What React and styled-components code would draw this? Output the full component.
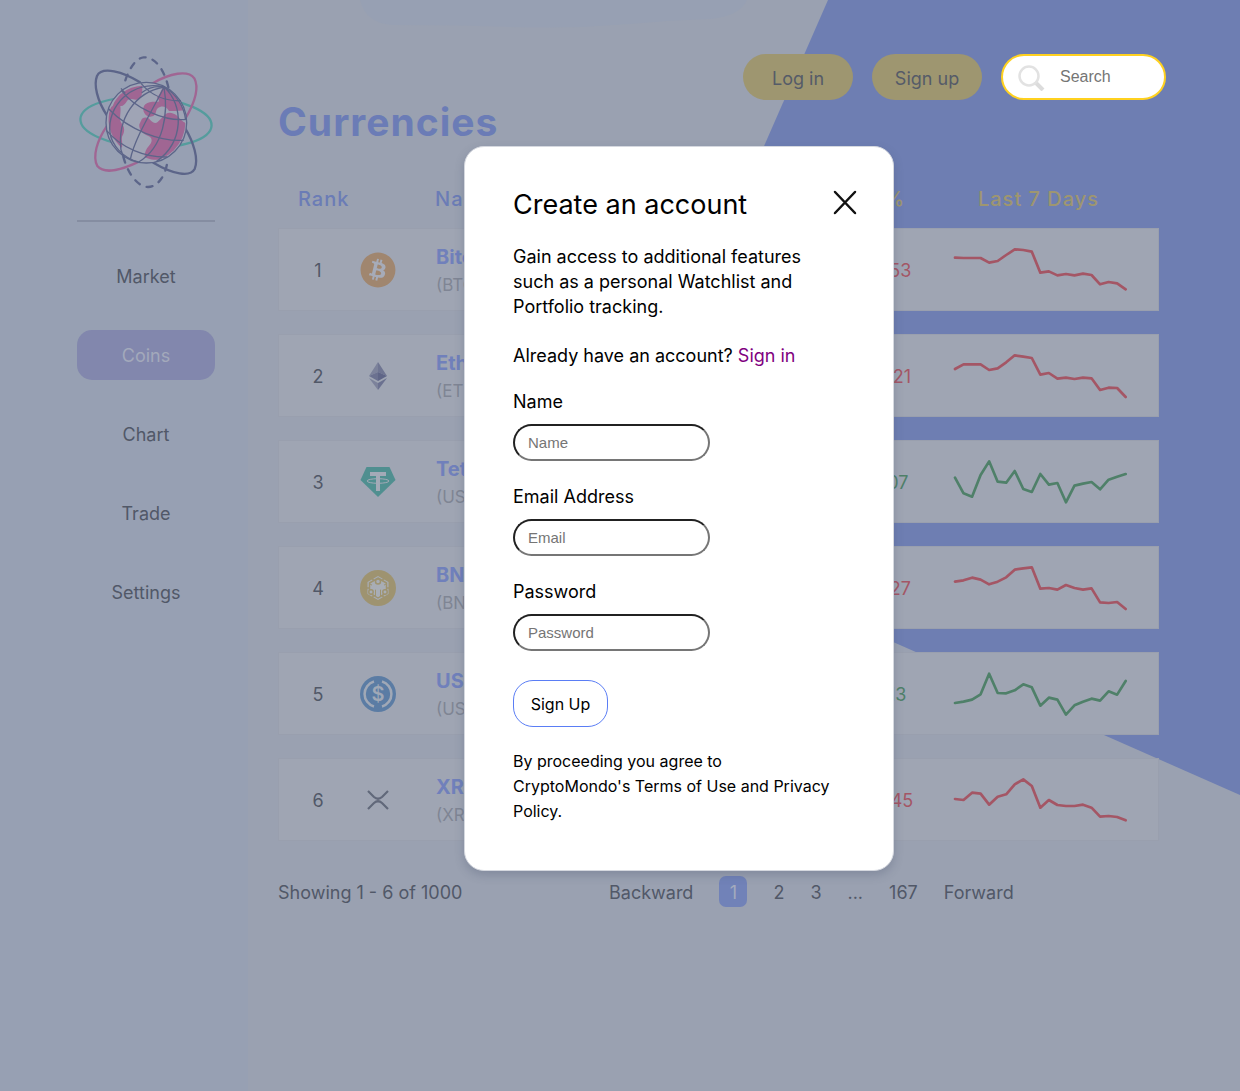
import React from "react";
import styled, { createGlobalStyle, css } from "styled-components";
import { FaBitcoin } from "react-icons/fa";

const color = {
  page: "#9aa1b1",
  sidebar: "#97a0b3",
  card: "#9fa5b3",
  cardEdge: "#999fae",
  blue: "#6e7eb2",
  heading: "#6b7cb6",
  name: "#7080bb",
  yellow: "#9e9670",
  text: "#515868",
  muted: "#7f8594",
  red: "#a45665",
  green: "#4f8069",
};

const GlobalStyle = createGlobalStyle`
  * { box-sizing: border-box; }
  body {
    margin: 0;
    background: ${color.page};
    color: ${color.text};
    font-family: Inter, "Liberation Sans", sans-serif;
    font-size: 18px;
    line-height: 24px;
  }
  button { font-family: inherit; cursor: pointer; }
  a { color: inherit; text-decoration: none; }
`;

const Page = styled.div`
  position: relative;
  display: flex;
  min-height: 100vh;
  overflow: hidden;
`;

const BlueShape = styled.div`
  position: absolute;
  top: 0;
  right: 0;
  width: 637px;
  height: 795px;
  background: ${color.blue};
  clip-path: polygon(225px 0, 100% 0, 100% 100%, 0 514px);
`;

const TopBlob = styled.svg`
  position: absolute;
  top: 0;
  left: 360px;
`;

const Sidebar = styled.aside`
  position: relative;
  flex: 0 0 248px;
  padding: 53px 33px 0 77px;
  background: ${color.sidebar};
`;

const LogoLink = styled.a`
  display: block;
  padding-bottom: 29px;
  border-bottom: 2px solid #858da1;
  svg { display: block; }
`;

const Menu = styled.nav`
  display: grid;
  gap: 29px;
  margin-top: 29px;
`;

const MenuLink = styled.a`
  height: 50px;
  border-radius: 15px;
  line-height: 52px;
  text-align: center;
  ${(p) =>
    p.$active &&
    css`
      background: #8287ad;
      color: #a3a9bb;
    `}
`;

const Main = styled.main`
  position: relative;
  flex: 1;
  min-width: 0;
  padding: 54px 81px 40px 30px;
`;

const TopBar = styled.header`
  display: flex;
  justify-content: flex-end;
  gap: 19px;
  margin-right: -7px;
`;

const PillButton = styled.button`
  width: 110px;
  height: 46px;
  padding: 2px 0 0;
  border: 0;
  border-radius: 23px;
  background: ${color.yellow};
  color: #555b68;
  font-size: 18px;
`;

const SearchBox = styled.label`
  display: flex;
  align-items: center;
  gap: 15px;
  width: 165px;
  height: 46px;
  padding: 0 15px;
  border: 2px solid #ffd11f;
  border-radius: 23px;
  background: #fff;
`;

const SearchInput = styled.input`
  flex: 1;
  min-width: 0;
  padding: 0;
  border: 0;
  outline: 0;
  background: none;
  font: 16px "Liberation Sans", Arial, sans-serif;
  &::placeholder { color: #757575; }
`;

const Title = styled.h1`
  margin: 0;
  color: ${color.heading};
  font-size: 39px;
  font-weight: 700;
  line-height: 44px;
  letter-spacing: 1px;
`;

const CoinTable = styled.table`
  display: block;
  margin-top: 43px;
  thead { display: block; }
  tbody { display: grid; gap: 23px; margin-top: 17px; }
`;

const Row = styled.tr`
  display: grid;
  grid-template-columns: 80px 40px 1fr 66px 241px;
  align-items: center;
`;

const CoinRow = styled(Row)`
  height: 83px;
  background: ${color.card};
  box-shadow: inset 0 0 0 1px ${color.cardEdge};
`;

const Heading = styled.th`
  padding: 0 ${(p) => p.$right || 0}px 0 ${(p) => p.$left || 0}px;
  color: ${(p) => (p.$yellow ? color.yellow : color.heading)};
  font-size: 20px;
  font-weight: 500;
  letter-spacing: 1px;
  text-align: ${(p) => p.$align || "left"};
  white-space: nowrap;
`;

const Cell = styled.td`
  padding: 2px 0 0;
  text-align: center;
  white-space: nowrap;
`;

const DrawingCell = styled.td`
  padding: 0;
  svg { display: block; margin: 0 auto; }
`;

const NameCell = styled(Cell)`
  padding-left: 38px;
  text-align: left;
`;

const CoinName = styled.div`
  color: ${color.name};
  font-size: 20px;
  font-weight: 700;
  line-height: 28px;
`;

const CoinSymbol = styled.div`
  color: ${color.muted};
  font-size: 17px;
  line-height: 28px;
`;

const Change = styled(Cell)`
  padding-left: 10px;
  color: ${(p) => (p.$up ? color.green : color.red)};
`;

const Footer = styled.footer`
  display: flex;
  align-items: flex-start;
  margin-top: 35px;
  line-height: 33px;
`;

const Showing = styled.span`
  flex: 0 0 331px;
`;

const Pager = styled.nav`
  display: flex;
  gap: 26px;
`;

const PageLink = styled.a`
  height: 31px;
  ${(p) =>
    p.$active &&
    css`
      width: 28px;
      border-radius: 7px;
      background: #7182b8;
      color: #a3aabd;
      text-align: center;
    `}
`;

const ModalLayer = styled.div`
  position: absolute;
  inset: 0;
  display: flex;
  align-items: flex-start;
  justify-content: center;
  padding: 146px 0 0 118px;
  pointer-events: none;
`;

const Modal = styled.section`
  width: 430px;
  padding: 41px 48px 46px;
  border: 1px solid #d5d8df;
  border-radius: 20px;
  background: #fff;
  box-shadow: 0 4px 10px rgba(60, 70, 100, 0.25);
  color: #000;
  pointer-events: auto;
`;

const ModalHead = styled.div`
  display: flex;
  justify-content: space-between;
  margin-right: -12px;
`;

const ModalTitle = styled.h2`
  margin: 0;
  font-size: 27px;
  font-weight: 400;
  line-height: 34px;
`;

const CloseButton = styled.button`
  height: 30px;
  padding: 0;
  border: 0;
  background: none;
  svg { display: block; }
`;

const Text = styled.p`
  margin: ${(p) => p.$top}px 0 0;
  line-height: 25px;
`;

const Intro = styled(Text)`
  max-width: 300px;
`;

const Terms = styled(Text)`
  max-width: 324px;
  font-size: 16px;
`;

const SignInLink = styled.a`
  color: #800080;
`;

const Form = styled.form`
  display: grid;
  justify-items: start;
  gap: 24px;
  margin-top: 22px;
`;

const Field = styled.label`
  display: grid;
  gap: 10px;
`;

const FieldInput = styled.input`
  width: 197px;
  height: 37px;
  padding: 0 13px;
  border: 2px inset #767676;
  border-radius: 20px;
  background: #fff;
  font: 15px "Liberation Sans", Arial, sans-serif;
  &::placeholder { color: #757575; }
`;

const SubmitButton = styled.button`
  width: 95px;
  height: 47px;
  margin-top: 5px;
  padding: 0;
  border: 1px solid #5a7df5;
  border-radius: 20px;
  background: #fff;
  color: #000;
  font-size: 16px;
`;

function Logo() {
  const navy = "#5c6589";
  const pink = "#a06693";
  return (
    <svg width="138" height="138" viewBox="51 39 414 414" fill="none" aria-label="CryptoMondo">
      <defs>
        <clipPath id="globe">
          <circle cx="259" cy="248" r="117" />
        </clipPath>
      </defs>
      <g strokeWidth="7" strokeLinecap="round">
        <ellipse cx="258" cy="247" rx="197" ry="75" stroke="#559c9d" transform="rotate(3 258 247)" />
        <path d="M196 121C208 85 228 54 251 52C286 50 314 90 326 146M190 350C203 400 232 440 264 441C296 440 317 404 322 366" stroke={navy} strokeDasharray="18 22" />
        <path d="M240 127C190 96 126 77 111 108C101 133 110 180 142 228M374 262C402 308 416 358 404 387C390 413 338 402 280 368" stroke={navy} />
        <path d="M276 131C330 99 384 89 403 115C419 146 402 192 376 236M142 256C110 302 97 350 112 378C132 402 183 392 243 362" stroke={pink} />
      </g>
      <circle cx="259" cy="248" r="121" fill="#9fa4b5" />
      <g clipPath="url(#globe)" fill={pink}>
        <path d="M158 198C170 165 200 140 246 137C249 160 245 180 228 179C212 176 207 175 201 183C196 192 188 200 181 198C184 222 176 235 184 249C194 260 196 275 186 290C184 302 190 315 185 323C158 300 143 262 146 231C148 211 151 202 158 198Z" />
        <path d="M310 141C340 153 366 181 372 211C356 214 340 213 327 213C318 197 304 196 293 205C286 212 291 220 280 228L268 231C250 225 244 205 256 193C266 184 277 185 296 185C299 178 293 179 291 171C302 163 302 150 310 141Z" />
        <path d="M246 236C255 230 265 231 270 239C277 247 286 253 293 246L306 233C317 220 325 215 341 221C356 227 359 240 379 250C378 295 354 341 313 358C288 362 263 358 254 350C254 335 259 325 267 317C279 304 277 291 263 287C245 281 236 267 238 253Z" />
      </g>
      <g stroke={navy} strokeWidth="4">
        <circle cx="259" cy="248" r="121" />
        <path d="M312 141C284 200 225 290 211 358M312 141C225 157 171 235 183 330M312 141C215 119 140 200 150 278C155 315 188 353 235 366M312 141C325 218 313 320 236 366M312 141C373 195 372 306 290 364M183 145L196 160M183 330L193 358M312 141C344 160 370 190 377 240" />
        <path d="M243 130C275 168 320 184 363 182M184 151C223 204 313 245 379 238M146 207C210 272 302 305 371 301M140 272C183 324 257 353 322 351M245 158C265 143 285 137 312 141" />
      </g>
    </svg>
  );
}

const BitcoinIcon = () => (
  <svg width="36" height="36" viewBox="0 0 36 36">
    <circle cx="18" cy="18" r="16" fill="#a6abb8" />
    <FaBitcoin size={36} color="#a0866f" />
  </svg>
);

const EthereumIcon = () => (
  <svg width="36" height="36" viewBox="0 0 36 36">
    <path d="M18 4L9 18L18 14Z" fill="#7c829b" />
    <path d="M18 4L27 18L18 14Z" fill="#6f7592" />
    <path d="M9 18L18 14V23Z" fill="#6b7190" />
    <path d="M27 18L18 14V23Z" fill="#5f6587" />
    <path d="M9 20L18 25V32Z" fill="#7c829b" />
    <path d="M27 20L18 25V32Z" fill="#6b7190" />
  </svg>
);

const TetherIcon = () => (
  <svg width="36" height="36" viewBox="0 0 36 36">
    <path d="M6.500 3H29.500L35.500 16L18 33L.5 16Z" fill="#508f90" />
    <path d="M10 8H26V12H20V27H16V12H10Z" fill="#a3aab7" />
    <ellipse cx="18" cy="17" rx="11" ry="2.300" fill="none" stroke="#a3aab7" />
  </svg>
);

const BnbIcon = () => (
  <svg width="36" height="36" viewBox="0 0 36 36">
    <circle cx="18" cy="18" r="18" fill="#9e9370" />
    <path d="M18 6L28.500 12V24L18 30L7.500 24V12Z" fill="#a8adb5" />
    <g fill="none" stroke="#9e9370" strokeWidth="1.500">
      <path d="M18 8L26.500 13V23L18 28L9.500 23V13Z" />
      <path d="M10 14L18 18.500L26 14M15.500 19V26M20.500 19V26" strokeWidth="1" />
    </g>
    <g fill="#a8adb5" stroke="#9e9370" strokeWidth="1.500">
      <circle cx="18" cy="11.500" r="2.500" />
      <circle cx="11" cy="22" r="2.200" />
      <circle cx="25" cy="22" r="2.200" />
    </g>
    <path d="M12 14L18 17L24 14V17L20 20V26L18 27L16 26V20L12 17Z" fill="#a8adb5" />
    <path d="M6 18H9M27 18H30M12 8L14 11M24 8L22 11M12 28L14 25M24 28L22 25" stroke="#9e9370" strokeWidth="1.500" />
  </svg>
);

const DollarText = styled.text`
  font: 600 20px Inter, sans-serif;
  text-anchor: middle;
`;

const UsdcIcon = () => (
  <svg width="36" height="36" viewBox="0 0 36 36" fill="none" stroke="#a0a8b6" strokeWidth="2.500">
    <circle cx="18" cy="18" r="18" fill="#5b7ca4" stroke="none" />
    <path d="M14 5.500A13 13 0 0 0 14 30.500M22 5.500A13 13 0 0 1 22 30.500" />
    <DollarText x="18" y="25" fill="#a0a8b6" stroke="none">$</DollarText>
  </svg>
);

const XrpIcon = () => (
  <svg width="36" height="36" viewBox="0 0 36 36" fill="none" stroke="#61687a" strokeWidth="2.200">
    <path d="M8 9L14 15Q18 18.500 22 15L28 9M8 27L14 21Q18 17.500 22 21L28 27" />
  </svg>
);

const coins = [
  { name: "Bitcoin", symbol: "BTC", change: "-1.53", Icon: BitcoinIcon,
    trend: [68, 69, 69, 69, 83, 78, 60, 43, 45, 50, 113, 109, 121, 117, 121, 116, 120, 148, 141, 145, 163] },
  { name: "Ethereum", symbol: "ETH", change: "-2.21", Icon: EthereumIcon,
    trend: [84, 70, 70, 70, 87, 82, 64, 43, 47, 51, 101, 96, 113, 110, 114, 110, 112, 147, 140, 141, 168] },
  { name: "Tether", symbol: "USDT", change: "0.07", up: true, Icon: TetherIcon,
    trend: [92, 139, 149, 84, 43, 104, 107, 72, 126, 135, 81, 113, 108, 166, 116, 110, 105, 127, 98, 89, 81] },
  { name: "BNB", symbol: "BNB", change: "-1.27", Icon: BnbIcon,
    trend: [86, 82, 74, 80, 94, 86, 73, 50, 46, 43, 107, 105, 110, 96, 105, 110, 106, 148, 150, 147, 168] },
  { name: "USDC", symbol: "USDC", change: "0.13", up: true, Icon: UsdcIcon,
    trend: [132, 128, 122, 106, 44, 102, 103, 94, 76, 85, 140, 116, 122, 167, 139, 128, 119, 125, 97, 107, 66] },
  { name: "XRP", symbol: "XRP", change: "-3.45", Icon: XrpIcon,
    trend: [102, 105, 83, 86, 119, 95, 88, 58, 43, 63, 128, 105, 120, 123, 123, 119, 128, 155, 153, 156, 166] },
];

function Sparkline({ trend, up }) {
  const points = trend.map((y, i) => `${18 + i * 25.6},${y}`).join(" ");
  return (
    <svg width="180" height="69" viewBox="0 0 540 207">
      <polyline points={points} fill="none" stroke={up ? color.green : color.red} strokeWidth="8" strokeLinecap="round" strokeLinejoin="round" />
    </svg>
  );
}

export default function App() {
  return (
    <Page>
      <GlobalStyle />
      <BlueShape />
      <TopBlob width="387" height="30" viewBox="0 0 387 30">
        <path d="M0 0Q6 24 34 25Q100 25 150 27Q210 29 270 24Q310 20 350 19Q380 16 387 0Z" fill={color.sidebar} />
      </TopBlob>

      <Sidebar>
        <LogoLink href="#home">
          <Logo />
        </LogoLink>
        <Menu>
          {["Market", "Coins", "Chart", "Trade", "Settings"].map((item) => (
            <MenuLink key={item} href={"#" + item.toLowerCase()} $active={item === "Coins"}>
              {item}
            </MenuLink>
          ))}
        </Menu>
      </Sidebar>

      <Main>
        <TopBar>
          <PillButton type="button">Log in</PillButton>
          <PillButton type="button">Sign up</PillButton>
          <SearchBox>
            <svg width="27" height="27" viewBox="0 0 27 27" fill="none" aria-hidden="true">
              <path d="M17 18L25 26" stroke="#dcdcdc" strokeWidth="4" />
              <circle cx="11" cy="12" r="9.500" stroke="#e2e2e2" strokeWidth="2.500" />
            </svg>
            <SearchInput type="search" placeholder="Search" aria-label="Search" />
          </SearchBox>
        </TopBar>
        <Title>Currencies</Title>

        <CoinTable>
          <thead>
            <Row>
              <Heading $left={20}>Rank</Heading>
              <Heading aria-label="Icon" />
              <Heading $left={37}>Name</Heading>
              <Heading $yellow $align="right" $right={13}>%</Heading>
              <Heading $yellow $align="center">Last 7 Days</Heading>
            </Row>
          </thead>
          <tbody>
            {coins.map(({ name, symbol, change, up, Icon, trend }, i) => (
              <CoinRow key={name}>
                <Cell>{i + 1}</Cell>
                <DrawingCell><Icon /></DrawingCell>
                <NameCell>
                  <CoinName>{name}</CoinName>
                  <CoinSymbol>({symbol})</CoinSymbol>
                </NameCell>
                <Change $up={up}>{change}</Change>
                <DrawingCell><Sparkline trend={trend} up={up} /></DrawingCell>
              </CoinRow>
            ))}
          </tbody>
        </CoinTable>

        <Footer>
          <Showing>Showing 1 - 6 of 1000</Showing>
          <Pager>
            <PageLink href="#back">Backward</PageLink>
            <PageLink href="#1" $active>1</PageLink>
            <PageLink href="#2">2</PageLink>
            <PageLink href="#3">3</PageLink>
            <span>...</span>
            <PageLink href="#167">167</PageLink>
            <PageLink href="#next">Forward</PageLink>
          </Pager>
        </Footer>
      </Main>

      <ModalLayer>
        <Modal role="dialog" aria-labelledby="modal-title">
          <ModalHead>
            <ModalTitle id="modal-title">Create an account</ModalTitle>
            <CloseButton type="button" aria-label="Close">
              <svg width="24" height="30" viewBox="0 0 24 30" stroke="#111" strokeWidth="2.500" strokeLinecap="round">
                <path d="M2 4L22 25M22 4L2 25" />
              </svg>
            </CloseButton>
          </ModalHead>
          <Intro $top={22}>
            Gain access to additional features such as a personal Watchlist and Portfolio tracking.
          </Intro>
          <Text $top={24}>
            Already have an account? <SignInLink href="#signin">Sign in</SignInLink>
          </Text>
          <Form>
            <Field>
              Name
              <FieldInput type="text" placeholder="Name" />
            </Field>
            <Field>
              Email Address
              <FieldInput type="email" placeholder="Email" />
            </Field>
            <Field>
              Password
              <FieldInput type="password" placeholder="Password" />
            </Field>
            <SubmitButton type="submit">Sign Up</SubmitButton>
          </Form>
          <Terms $top={22}>
            By proceeding you agree to CryptoMondo's Terms of Use and Privacy Policy.
          </Terms>
        </Modal>
      </ModalLayer>
    </Page>
  );
}
